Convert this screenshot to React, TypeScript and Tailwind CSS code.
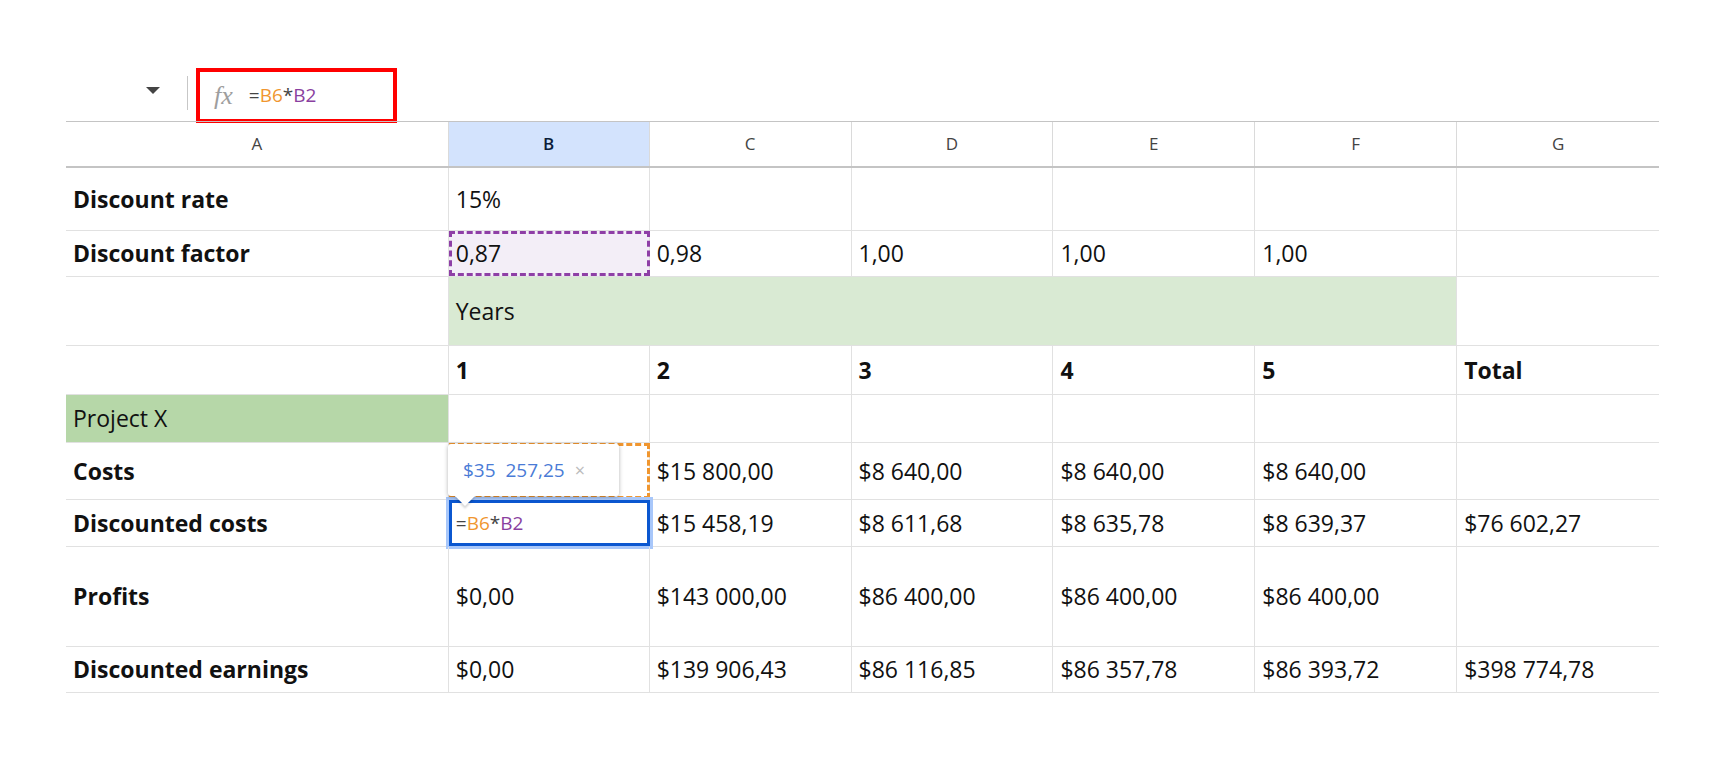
import React from "react";

const cols = [383, 201, 202, 202, 202, 202, 202];
const heights = [63, 46, 69, 49, 48, 57, 47, 100, 46];
type C = { t?: string; b?: boolean; cls?: string };
const rows: C[][] = [
  [{ t: "Discount rate", b: true }, { t: "15%" }, {}, {}, {}, {}, {}],
  [{ t: "Discount factor", b: true }, { t: "0,87", cls: "purple" }, { t: "0,98" }, { t: "1,00" }, { t: "1,00" }, { t: "1,00" }, {}],
  [{}, { t: "Years", cls: "years" }, { cls: "years" }, { cls: "years" }, { cls: "years" }, { cls: "years" }, {}],
  [{}, { t: "1", b: true }, { t: "2", b: true }, { t: "3", b: true }, { t: "4", b: true }, { t: "5", b: true }, { t: "Total", b: true }],
  [{ t: "Project X", cls: "proj" }, {}, {}, {}, {}, {}, {}],
  [{ t: "Costs", b: true }, { cls: "orange" }, { t: "$15 800,00" }, { t: "$8 640,00" }, { t: "$8 640,00" }, { t: "$8 640,00" }, {}],
  [{ t: "Discounted costs", b: true }, { cls: "active" }, { t: "$15 458,19" }, { t: "$8 611,68" }, { t: "$8 635,78" }, { t: "$8 639,37" }, { t: "$76 602,27" }],
  [{ t: "Profits", b: true }, { t: "$0,00" }, { t: "$143 000,00" }, { t: "$86 400,00" }, { t: "$86 400,00" }, { t: "$86 400,00" }, {}],
  [{ t: "Discounted earnings", b: true }, { t: "$0,00" }, { t: "$139 906,43" }, { t: "$86 116,85" }, { t: "$86 357,78" }, { t: "$86 393,72" }, { t: "$398 774,78" }],
];

export default function App() {
  return (
    <div className="w-[1726px] h-[758px] bg-white overflow-hidden relative" style={{ fontFamily: '"Open Sans", "Noto Sans", sans-serif' }}>
      <div className="h-[121px] relative">
        <span className="absolute left-[146px] top-[87px] w-0 h-0 border-l-[7px] border-r-[7px] border-t-[7px] border-l-transparent border-r-transparent border-t-[#444]" />
        <div className="absolute left-[187px] top-[76px] w-px h-[34px] bg-[#c7c7c7]" />
        <div className="absolute left-[196px] top-[68px] w-[201px] h-[55px] border-[4px] border-[#ff0000] flex items-center pl-[14px]">
          <span className="italic text-[#9e9e9e] text-[26px] leading-none mr-[16px]" style={{ fontFamily: '"Liberation Serif", serif' }}>fx</span>
          <span className="text-[19px] text-[#444]">=</span>
          <span className="text-[19px] text-[#f0962f]">B6</span>
          <span className="text-[19px] text-[#444]">*</span>
          <span className="text-[19px] text-[#8a3fa0]">B2</span>
        </div>
      </div>
      <div className="ml-[66px] w-[1593px] relative">
        <div className="flex h-[47px] border-t border-b-2 border-[#c4c4c4] text-[17px] text-[#444]">
          {["A", "B", "C", "D", "E", "F", "G"].map((l, i) => (
            <div key={l} style={{ width: cols[i] }} className={`flex items-center justify-center border-r border-[#dadada] last:border-r-0 ${l === "B" ? "bg-[#d3e3fd] text-[#0b1d3a] font-semibold" : ""}`}>{l}</div>
          ))}
        </div>
        {rows.map((r, ri) => (
          <div key={ri} className="flex border-b border-[#e1e1e1]" style={{ height: heights[ri] }}>
            {r.map((c, ci) => {
              let extra = "";
              if (c.cls === "years") extra = "bg-[#d9ead3]";
              if (c.cls === "proj") extra = "bg-[#b6d7a8]";
              if (c.cls === "purple") extra = "bg-[#f3eef7] outline-dashed outline-[3px] -outline-offset-[3px] outline-[#8e3fa6]";
              if (c.cls === "orange") extra = "outline-dashed outline-[3px] -outline-offset-[3px] outline-[#f0962f]";
              if (c.cls === "active") extra = "outline outline-[3px] -outline-offset-[3px] outline-[#0b57d0] ring-[3px] ring-[#a8c7fa]";
              const noRight = c.cls === "years" && ci < 5;
              return (
                <div key={ci} style={{ width: cols[ci] }} className={`flex items-center px-[7px] text-[23px] text-[#111] whitespace-nowrap ${noRight ? "" : "border-r border-[#e1e1e1]"} last:border-r-0 ${c.b ? "font-bold" : ""} ${extra}`}>
                  {c.cls === "active" ? (
                    <span className="text-[19px]"><span className="text-[#444]">=</span><span className="text-[#f0962f]">B6</span><span className="text-[#444]">*</span><span className="text-[#8a3fa0]">B2</span></span>
                  ) : c.t}
                </div>
              );
            })}
          </div>
        ))}
        <div className="absolute left-[382px] top-[323px] w-[171px] h-[52px] bg-white rounded-[3px] shadow-[0_1px_4px_rgba(0,0,0,0.3)] flex items-center pl-[15px] text-[19px] text-[#4a7bd6]">
          <span>$35&nbsp; 257,25</span>
          <span className="ml-[10px] text-[#bbb] text-[18px]">×</span>
          <span className="absolute left-[10px] -bottom-[7px] w-[14px] h-[14px] bg-white rotate-45 shadow-[2px_2px_2px_rgba(0,0,0,0.15)]" />
        </div>
      </div>
    </div>
  );
}
